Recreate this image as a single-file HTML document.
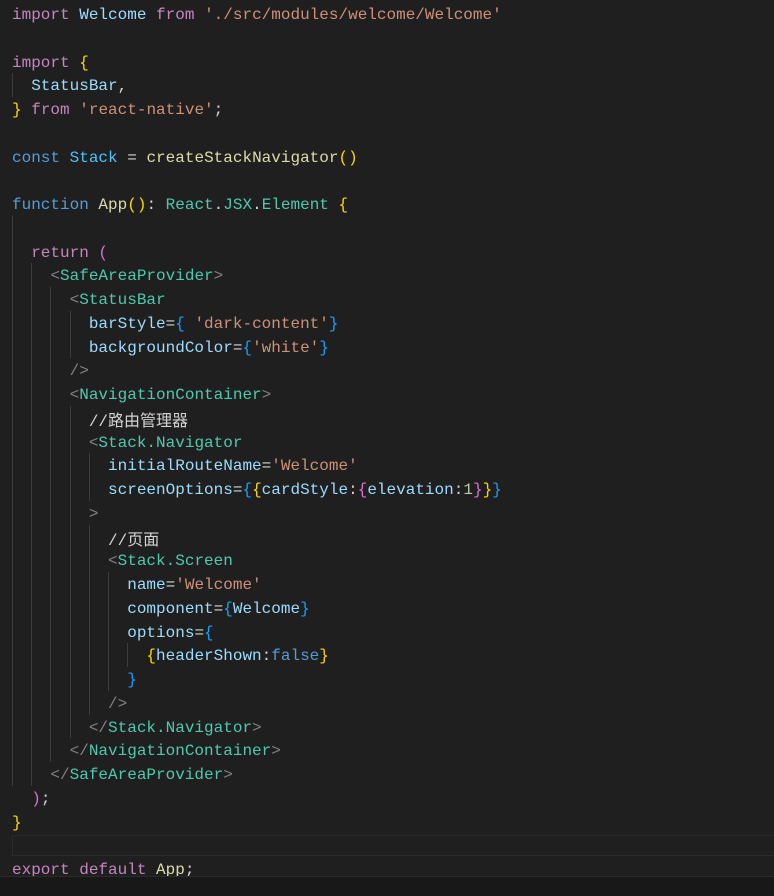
<!DOCTYPE html>
<html><head><meta charset="utf-8"><style>
html,body{margin:0;padding:0}
body{width:774px;height:895px;background:#1f1f1f;position:relative;overflow:hidden;font-family:"Liberation Mono","Noto Sans CJK SC",monospace;font-size:16px;color:#d4d4d4}
.w{position:absolute;left:0;top:2px;width:774px;height:874px}
.l{position:absolute;left:12px;height:23.75px;line-height:23.75px;white-space:pre}
.g{position:absolute;width:1px;background:#3c3c3c}
.k{color:#c586c0}.v{color:#9cdcfe}.s{color:#ce9178}.y{color:#ffd700}.p{color:#da70d6}.b{color:#179fff}
.t{color:#4ec9b0}.a{color:#808080}.st{color:#569cd6}.f{color:#dcdcaa}.c{color:#4fc1ff}.n{color:#b5cea8}
.zh{font-family:"Noto Sans CJK SC","Liberation Mono",sans-serif}
</style></head><body>
<div style="position:absolute;left:12px;top:835px;width:770px;height:21px;border:1px solid #2a2a2a;box-sizing:border-box"></div>
<div class="g" style="left:12px;top:73.25px;height:23.75px"></div>
<div class="g" style="left:12px;top:215.75px;height:570px"></div>
<div class="g" style="left:31px;top:263.25px;height:522.5px"></div>
<div class="g" style="left:50px;top:287px;height:475px"></div>
<div class="g" style="left:70px;top:310.75px;height:47.5px"></div>
<div class="g" style="left:70px;top:405.75px;height:332.5px"></div>
<div class="g" style="left:89px;top:453.25px;height:47.5px"></div>
<div class="g" style="left:89px;top:524.5px;height:190px"></div>
<div class="g" style="left:108px;top:572px;height:118.75px"></div>
<div class="g" style="left:127px;top:643.25px;height:23.75px"></div>
<div class="w">
<div class="l" style="top:2px"><span class="k">import</span> <span class="v">Welcome</span> <span class="k">from</span> <span class="s">'./src/modules/welcome/Welcome'</span></div>
<div class="l" style="top:49.5px"><span class="k">import</span> <span class="y">{</span></div>
<div class="l" style="top:73.25px">  <span class="v">StatusBar</span>,</div>
<div class="l" style="top:97px"><span class="y">}</span> <span class="k">from</span> <span class="s">'react-native'</span>;</div>
<div class="l" style="top:144.5px"><span class="st">const</span> <span class="c">Stack</span> = <span class="f">createStackNavigator</span><span class="y">()</span></div>
<div class="l" style="top:192px"><span class="st">function</span> <span class="f">App</span><span class="y">()</span>: <span class="t">React</span>.<span class="t">JSX</span>.<span class="t">Element</span> <span class="y">{</span></div>
<div class="l" style="top:239.5px">  <span class="k">return</span> <span class="p">(</span></div>
<div class="l" style="top:263.25px">    <span class="a">&lt;</span><span class="t">SafeAreaProvider</span><span class="a">&gt;</span></div>
<div class="l" style="top:287px">      <span class="a">&lt;</span><span class="t">StatusBar</span></div>
<div class="l" style="top:310.75px">        <span class="v">barStyle</span>=<span class="b">{</span> <span class="s">'dark-content'</span><span class="b">}</span></div>
<div class="l" style="top:334.5px">        <span class="v">backgroundColor</span>=<span class="b">{</span><span class="s">'white'</span><span class="b">}</span></div>
<div class="l" style="top:358.25px">      <span class="a">/&gt;</span></div>
<div class="l" style="top:382px">      <span class="a">&lt;</span><span class="t">NavigationContainer</span><span class="a">&gt;</span></div>
<div class="l" style="top:405.75px">        //<span class="zh">路由管理器</span></div>
<div class="l" style="top:429.5px">        <span class="a">&lt;</span><span class="t">Stack.Navigator</span></div>
<div class="l" style="top:453.25px">          <span class="v">initialRouteName</span>=<span class="s">'Welcome'</span></div>
<div class="l" style="top:477px">          <span class="v">screenOptions</span>=<span class="b">{</span><span class="y">{</span><span class="v">cardStyle</span>:<span class="p">{</span><span class="v">elevation</span>:<span class="n">1</span><span class="p">}</span><span class="y">}</span><span class="b">}</span></div>
<div class="l" style="top:500.75px">        <span class="a">&gt;</span></div>
<div class="l" style="top:524.5px">          //<span class="zh">页面</span></div>
<div class="l" style="top:548.25px">          <span class="a">&lt;</span><span class="t">Stack.Screen</span></div>
<div class="l" style="top:572px">            <span class="v">name</span>=<span class="s">'Welcome'</span></div>
<div class="l" style="top:595.75px">            <span class="v">component</span>=<span class="b">{</span><span class="v">Welcome</span><span class="b">}</span></div>
<div class="l" style="top:619.5px">            <span class="v">options</span>=<span class="b">{</span></div>
<div class="l" style="top:643.25px">              <span class="y">{</span><span class="v">headerShown</span>:<span class="st">false</span><span class="y">}</span></div>
<div class="l" style="top:667px">            <span class="b">}</span></div>
<div class="l" style="top:690.75px">          <span class="a">/&gt;</span></div>
<div class="l" style="top:714.5px">        <span class="a">&lt;/</span><span class="t">Stack.Navigator</span><span class="a">&gt;</span></div>
<div class="l" style="top:738.25px">      <span class="a">&lt;/</span><span class="t">NavigationContainer</span><span class="a">&gt;</span></div>
<div class="l" style="top:762px">    <span class="a">&lt;/</span><span class="t">SafeAreaProvider</span><span class="a">&gt;</span></div>
<div class="l" style="top:785.75px">  <span class="p">)</span>;</div>
<div class="l" style="top:809.5px"><span class="y">}</span></div>
<div class="l" style="top:857px"><span class="k">export</span> <span class="k">default</span> <span class="f">App</span>;</div>
</div>
<div style="position:absolute;left:0;top:876px;width:774px;height:19px;background:#181818;border-top:1px solid #2b2b2b"></div>
</body></html>
